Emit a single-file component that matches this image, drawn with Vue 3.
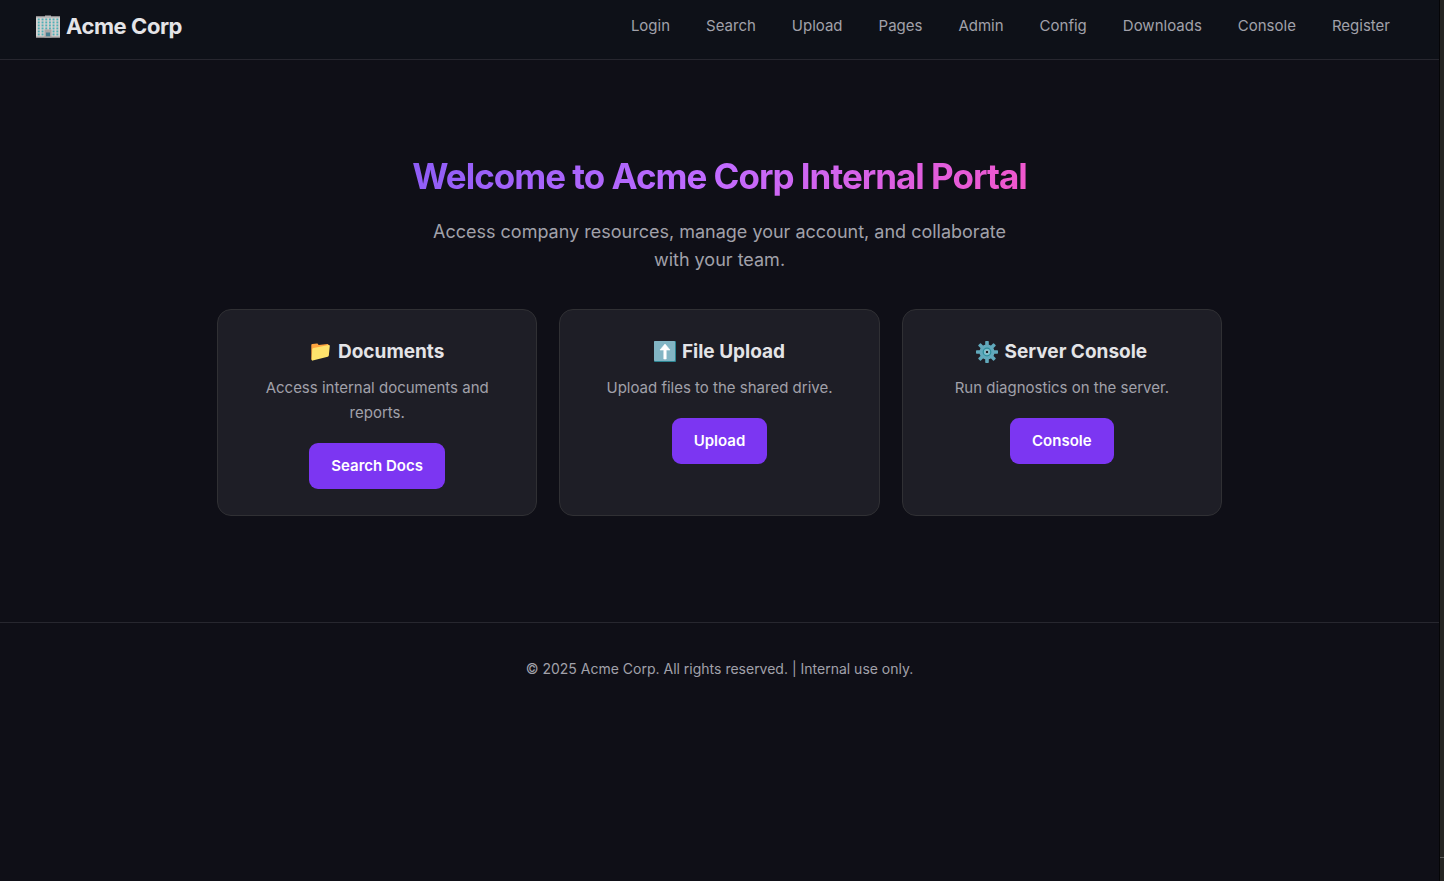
<script setup>
const links = ['Login', 'Search', 'Upload', 'Pages', 'Admin', 'Config', 'Downloads', 'Console', 'Register']
const cards = [
  { icon: 'folder', title: 'Documents', text: 'Access internal documents and reports.', action: 'Search Docs' },
  { icon: 'upload', title: 'File Upload', text: 'Upload files to the shared drive.', action: 'Upload' },
  { icon: 'gear', title: 'Server Console', text: 'Run diagnostics on the server.', action: 'Console' },
]
const gearTeeth = [0, 45, 90, 135, 180, 225, 270, 315]
</script>

<template>
  <div class="shell">
    <div class="page">
      <header class="topbar">
        <a class="brand" href="#">
          <svg class="brand-icon" viewBox="0 0 24 22" aria-hidden="true">
            <rect x="0" y="1" width="24" height="21" fill="#d3d1d0" />
            <rect x="0" y="1" width="24" height="1" fill="#a5a5a5" />
            <rect x="9" y="0" width="6" height="2" fill="#b4b4b4" />
            <g fill="#4fb0b5">
              <template v-for="y in [3, 6, 9, 12, 15, 18]" :key="y">
                <rect v-for="x in [1.8, 5.6, 9.3, 13, 16.6, 20.4]" :key="x" :x="x" :y="y" width="1.9" height="1.9" />
              </template>
            </g>
            <rect x="8.5" y="14" width="7" height="8" fill="#aaa8a8" />
            <rect x="10" y="17" width="4" height="4" fill="#467f91" />
            <rect x="0" y="21" width="24" height="1" fill="#a2a09f" />
          </svg>
          <span>Acme Corp</span>
        </a>
        <nav class="links">
          <a v-for="link in links" :key="link" href="#">{{ link }}</a>
        </nav>
      </header>

      <main class="hero">
        <h1>Welcome to Acme Corp Internal Portal</h1>
        <p class="lead">Access company resources, manage your account, and collaborate with your team.</p>

        <div class="cards">
          <section v-for="card in cards" :key="card.title" class="card">
            <h2>
              <svg class="card-icon" viewBox="0 0 22 22" aria-hidden="true">
                <template v-if="card.icon === 'folder'">
                  <path d="M1.3 4 Q1.3 3 2.3 3 L7 2.6 Q8 2.6 8.3 3.6 L8.6 4 L17.5 3 Q18.5 2.9 18.5 4 V14 L2 19 Q1.3 19 1.3 18 Z" fill="#ffa53f" />
                  <path d="M2.2 8.4 Q2.3 7.3 3.5 7.1 L18.7 4 Q20 3.9 19.8 5 L18.8 14.5 Q18.7 15.5 17.7 15.8 L2.7 19.6 Q1.6 19.8 1.7 18.6 Z" fill="#ffe36c" />
                </template>
                <template v-else-if="card.icon === 'upload'">
                  <rect width="22" height="21" rx="1" fill="#2d8592" />
                  <rect width="21" height="20" rx="1" fill="#82b5c4" />
                  <path d="M11 3 L16 9 H12.2 V18 H9.8 V9 H6 Z" fill="#fff" stroke="#fff" stroke-width=".6" stroke-linejoin="round" />
                </template>
                <template v-else>
                  <g fill="#61a9bc">
                    <rect v-for="a in gearTeeth" :key="a" x="9.2" y="0" width="3.6" height="6" rx=".7" :transform="`rotate(${a} 11 11)`" />
                    <circle cx="11" cy="11" r="7.6" />
                  </g>
                  <circle cx="11" cy="11" r="3.8" fill="#74becd" stroke="#2e8c9b" stroke-width="1.2" />
                  <circle cx="11" cy="11" r="1.8" fill="#1e1e26" stroke="#b0dbe4" stroke-width=".8" />
                </template>
              </svg>
              <span>{{ card.title }}</span>
            </h2>
            <p>{{ card.text }}</p>
            <button type="button">{{ card.action }}</button>
          </section>
        </div>
      </main>

      <footer class="footer">© 2025 Acme Corp. All rights reserved. | Internal use only.</footer>
    </div>
    <div class="rail"><div class="rail-end"></div></div>
  </div>
</template>

<style>
body {
  background: #0f0f17;
}
</style>

<style scoped>
.shell {
  display: flex;
  min-height: 100vh;
  color: #e4e4e7;
  font-family: Inter, "Liberation Sans", sans-serif;
  font-size: 15px;
  line-height: 25px;
}
.page {
  flex: 1;
  min-width: 0;
  background: #0f0f17;
}
.rail {
  display: flex;
  flex-direction: column;
  justify-content: flex-end;
  width: 4px;
  border-left: 1px solid #050507;
  background: #252523;
}
.rail-end {
  height: 23px;
  border-top: 1px solid #5c5c5a;
}
.topbar {
  display: flex;
  justify-content: space-between;
  align-items: flex-start;
  padding: 9px 49px 15px 36px;
  border-bottom: 1px solid #27272f;
  background: #0e1118;
}
.brand {
  display: flex;
  align-items: center;
  gap: 6px;
  color: #e4e4e7;
  font-size: 22px;
  font-weight: 700;
  line-height: 35px;
  letter-spacing: -0.02em;
  text-decoration: none;
}
.brand-icon {
  width: 24px;
  height: 23px;
}
.links {
  display: flex;
  gap: 36px;
  line-height: 33px;
}
.links a {
  color: #a1a1aa;
  text-decoration: none;
}
.hero {
  padding: 88px 36px 106px;
  text-align: center;
}
h1 {
  width: fit-content;
  margin: 0 auto 14px;
  background: linear-gradient(135deg, #8b5cf6, #c26bff 50%, #f455c8);
  background-clip: text;
  color: transparent;
  font-size: 35px;
  font-weight: 700;
  line-height: 56px;
  letter-spacing: -1px;
}
.lead {
  max-width: 600px;
  margin: 0 auto 35px;
  color: #a1a1aa;
  font-size: 18px;
  line-height: 28px;
}
.cards {
  display: grid;
  grid-template-columns: repeat(3, 1fr);
  gap: 22px;
  max-width: 1005px;
  margin: 0 auto;
}
.card {
  padding: 26px;
  border: 1px solid #303034;
  border-radius: 14px;
  background: #1e1e26;
}
h2 {
  display: flex;
  justify-content: center;
  align-items: center;
  gap: 6px;
  margin: 0 0 8px;
  font-size: 19px;
  font-weight: 700;
  line-height: 31px;
}
.card-icon {
  width: 22px;
  height: 22px;
}
.card p {
  margin: 0 0 18px;
  color: #a1a1aa;
}
button {
  padding: 10px 22px;
  border: 0;
  border-radius: 9px;
  background: #7c36f2;
  color: #fff;
  font: inherit;
  font-weight: 600;
  line-height: 26px;
}
.footer {
  padding: 35px;
  border-top: 1px solid #27272f;
  color: #a1a1aa;
  font-size: 14px;
  line-height: 22px;
  text-align: center;
}
</style>
